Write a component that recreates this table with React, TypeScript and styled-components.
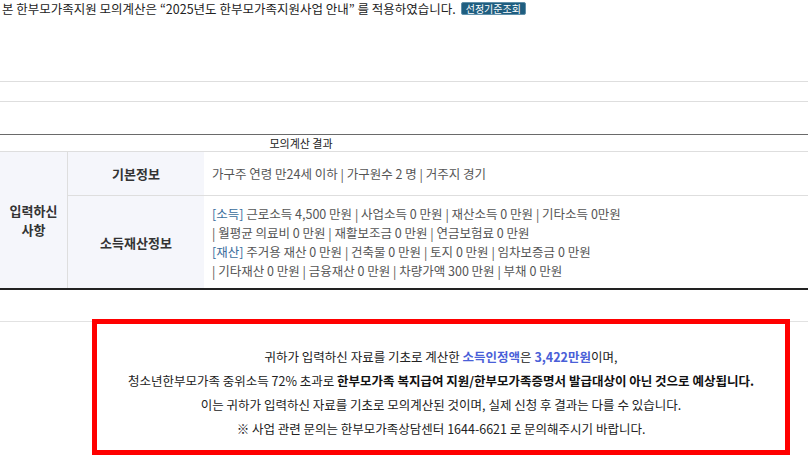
import React from "react";
import styled, {createGlobalStyle} from "styled-components";

const GlobalStyle = createGlobalStyle`
  body {
    margin: 0;
    background: #fff;
    font-family: "Noto Sans CJK KR", "Noto Sans", sans-serif;
    color: #222;
  }
`

export default function App() {
  return (
    <Page>
      <GlobalStyle/>
      <Notice>
        본 한부모가족지원 모의계산은 “2025년도 한부모가족지원사업 안내” 를 적용하였습니다.
        <Badge>선정기준조회</Badge>
      </Notice>
      <EmptyBand/>
      <ResultTable>
        <thead>
          <tr>
            <Caption colSpan={3}>모의계산 결과</Caption>
          </tr>
        </thead>
        <tbody>
          <tr>
            <GroupHead rowSpan={2}>입력하신<br/>사항</GroupHead>
            <RowHead $height={43}>기본정보</RowHead>
            <Value>가구주 연령 만24세 이하 | 가구원수 2 명 | 거주지 경기</Value>
          </tr>
          <tr>
            <RowHead $height={92}>소득재산정보</RowHead>
            <Value>
              <Tag>[소득]</Tag> 근로소득 4,500 만원 | 사업소득 0 만원 | 재산소득 0 만원 | 기타소득 0만원<br/>
              | 월평균 의료비 0 만원 | 재활보조금 0 만원 | 연금보험료 0 만원<br/>
              <Tag>[재산]</Tag> 주거용 재산 0 만원 | 건축물 0 만원 | 토지 0 만원 | 임차보증금 0 만원<br/>
              | 기타재산 0 만원 | 금융재산 0 만원 | 차량가액 300 만원 | 부채 0 만원
            </Value>
          </tr>
        </tbody>
      </ResultTable>
      <ResultArea>
        <ResultBox>
          <Line>
            귀하가 입력하신 자료를 기초로 계산한 <Accent>소득인정액</Accent>은 <Accent>3,422만원</Accent>이며,
          </Line>
          <Line>
            청소년한부모가족 중위소득 72% 초과로 <strong>한부모가족 복지급여 지원/한부모가족증명서 발급대상이 아닌 것으로 예상됩니다.</strong>
          </Line>
          <Line>이는 귀하가 입력하신 자료를 기초로 모의계산된 것이며, 실제 신청 후 결과는 다를 수 있습니다.</Line>
          <Line>※ 사업 관련 문의는 한부모가족상담센터 1644-6621 로 문의해주시기 바랍니다.</Line>
        </ResultBox>
      </ResultArea>
    </Page>
  )
}

const Page = styled.div`
  width: 808px;
  height: 460px;
  overflow: hidden;
`

const Notice = styled.div`
  display: flex;
  align-items: center;
  gap: 5px;
  height: 17px;
  padding-left: 2px;
  font-size: 12.5px;
  color: #222;
  white-space: nowrap;
`

const Badge = styled.span`
  display: inline-flex;
  align-items: center;
  height: 11px;
  padding: 0 4px;
  background: #1f5e80;
  border: 1px solid #5f8fa9;
  border-radius: 2px;
  color: #fff;
  font-size: 10px;
  line-height: 1;
`

const EmptyBand = styled.div`
  margin-top: 64px;
  height: 19px;
  border-top: 1px solid #dedede;
  border-bottom: 1px solid #dedede;
`

const ResultTable = styled.table`
  width: 100%;
  margin-top: 32px;
  border-collapse: collapse;
  border-top: 1px solid #6a6a6a;
  border-bottom: 2px solid #222;
  font-size: 12.5px;
`

const Caption = styled.th`
  height: 16px;
  padding: 0 206px 0 0;
  border-bottom: 1px solid #dedede;
  font-size: 11px;
  font-weight: 400;
  color: #222;
  text-align: center;
  line-height: 16px;
`

const GroupHead = styled.th`
  width: 67px;
  padding: 0;
  background: #f5f6fb;
  border-right: 1px solid #dedede;
  font-size: 13px;
  font-weight: 700;
  line-height: 19px;
  color: #333;
`

const RowHead = styled.th<{$height: number}>`
  width: 136px;
  height: ${({$height}) => $height}px;
  padding: 0;
  background: #f5f6fb;
  border-bottom: 1px solid #dedede;
  font-size: 13px;
  font-weight: 700;
  color: #333;
  tr:last-child & {
    border-bottom: none;
  }
`

const Value = styled.td`
  padding: 0 0 0 8px;
  border-bottom: 1px solid #dedede;
  color: #555;
  line-height: 19px;
  white-space: nowrap;
  tr:last-child & {
    border-bottom: none;
  }
`

const Tag = styled.span`
  color: #3a6d9c;
`

const ResultArea = styled.div`
  margin-top: 31px;
  border-top: 1px solid #e2e2e2;
  padding-left: 92px;
`

const ResultBox = styled.div`
  width: 688px;
  height: 105px;
  margin-top: -3px;
  border: 5px solid #ff0000;
  padding-top: 21px;
  box-sizing: content-box;
  background: #fff;
  display: flex;
  flex-direction: column;
  align-items: center;
`

const Line = styled.p`
  margin: 0;
  height: 24px;
  line-height: 24px;
  font-size: 12.5px;
  color: #222;
  white-space: nowrap;
  strong {
    font-weight: 700;
    color: #111;
  }
`

const Accent = styled.strong`
  && {
    color: #4a5fd8;
  }
`
